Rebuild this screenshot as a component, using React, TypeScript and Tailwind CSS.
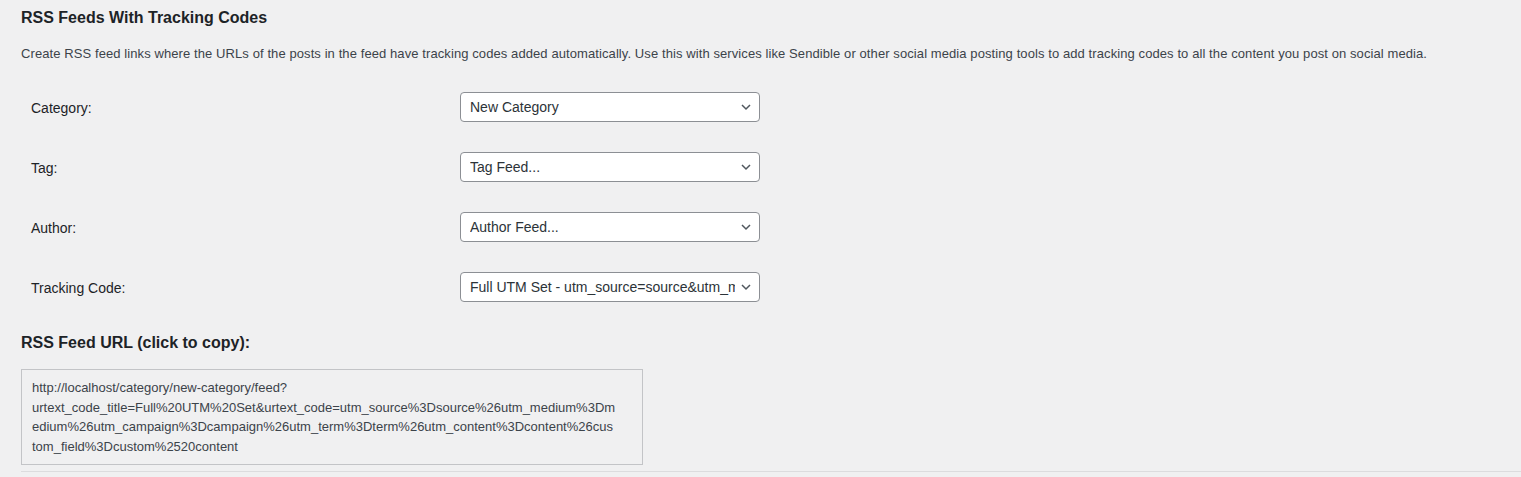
type Field = {
    label: string;
    value: string;
};

const fields: Field[] = [
    { label: "Category:", value: "New Category" },
    { label: "Tag:", value: "Tag Feed..." },
    { label: "Author:", value: "Author Feed..." },
    { label: "Tracking Code:", value: "Full UTM Set - utm_source=source&utm_medium=medium&utm_campaign=campaign" },
];

const urlLines = [
    "http://localhost/category/new-category/feed?",
    "urtext_code_title=Full%20UTM%20Set&urtext_code=utm_source%3Dsource%26utm_medium%3Dm",
    "edium%26utm_campaign%3Dcampaign%26utm_term%3Dterm%26utm_content%3Dcontent%26cus",
    "tom_field%3Dcustom%2520content",
];

function Chevron() {
    return (
        <svg width="12" height="12" viewBox="0 0 12 12" className="text-[#50575e]">
            <path d="M2 4l4 4 4-4" fill="none" stroke="currentColor" strokeWidth="1.5" />
        </svg>
    );
}

function Select({ value }: { value: string }) {
    return (
        <div className="relative h-[30px] w-[300px]">
            <select
                defaultValue={value}
                className="h-[30px] w-full appearance-none rounded-[4px] border border-[#8c8f94] bg-white pl-[9px] pr-[24px] pt-[1px] font-['Liberation_Sans',Arial,sans-serif] text-[14px] text-[#2c3338] outline-none"
            >
                <option value={value}>{value}</option>
            </select>
            <span className="pointer-events-none absolute right-[8px] top-[9px]">
                <Chevron />
            </span>
        </div>
    );
}

export default function App() {
    return (
        <div className="min-h-[477px] w-[1521px] overflow-hidden bg-[#f0f0f1] font-['Liberation_Sans',Arial,sans-serif] text-[#3c434a]">
            <div className="pl-[21px]">
                <h2 className="mt-[7px] text-[16px] font-bold leading-[22px] text-[#1d2327]">
                    RSS Feeds With Tracking Codes
                </h2>
                <p className="mt-[15px] text-[13px] leading-[20px] tracking-[0.09px]">
                    Create RSS feed links where the URLs of the posts in the feed have tracking codes added automatically. Use this with services like Sendible or other social media posting tools to add tracking codes to all the content you post on social media.
                </p>

                <div className="mt-[13px] flex flex-col">
                    {fields.map((f) => (
                        <div key={f.label} className="flex h-[60px] items-center">
                            <div className="w-[439px] pl-[10px] pt-[2px] text-[14px] text-[#1d2327]">{f.label}</div>
                            <Select value={f.value} />
                        </div>
                    ))}
                </div>

                <h3 className="mt-[15px] text-[16px] font-bold leading-[22px] text-[#1d2327]">
                    RSS Feed URL (click to copy):
                </h3>

                <div className="mt-[15px] w-[622px] border border-[#c3c4c7] bg-[#f0f0f1] px-[10px] py-[8px] text-[13px] leading-[19.5px] text-[#3c434a]">
                    {urlLines.map((l) => (
                        <div key={l} className="whitespace-nowrap">{l}</div>
                    ))}
                </div>

                <div className="mt-[6px] h-[1px] bg-[#dcdcde]" />
            </div>
        </div>
    );
}
